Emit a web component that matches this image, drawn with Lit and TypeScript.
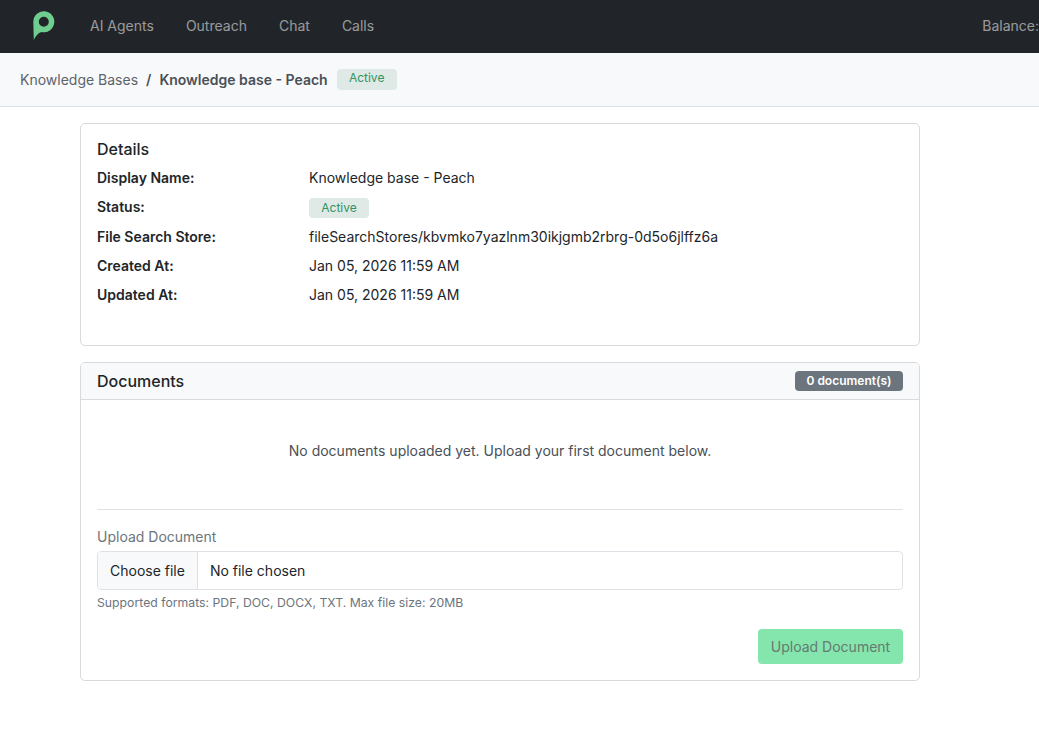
import { LitElement, html, css } from "lit";
import { customElement } from "lit/decorators.js";

@customElement("app-root")
export class AppRoot extends LitElement {
  static styles = css`
    :host { display: block; width: 1039px; height: 752px; overflow: hidden; background: #fff; font-family: Inter, "Liberation Sans", sans-serif; font-size: 14px; line-height: 21px; color: #212529; }
    * { box-sizing: border-box; }
    .nav { height: 53px; background: #212529; display: flex; align-items: center; padding: 0 0 2px 32px; white-space: nowrap; overflow: hidden; }
    .logo { width: 24px; height: 32px; display: block; margin-right: 34px; margin-top: -1px; flex: none; }
    .links { display: flex; gap: 32px; color: rgba(255,255,255,.55); }
    .balance { margin-left: auto; color: rgba(255,255,255,.55); }
    .crumbs { height: 54px; background: #f8f9fa; border-bottom: 1px solid #dee2e6; display: flex; align-items: center; padding: 0 20px; color: #6c757d; }
    .crumbs .root { color: #5c636a; }
    .crumbs .sep { margin: 0 8px; font-weight: 600; color: #495057; }
    .crumbs .cur { font-weight: 600; color: #495057; margin-right: 9px; }
    .active { display: block; width: 60px; height: 20px; line-height: 19px; border-radius: 4px; background: #dfe9e5; color: #2f9364; font-size: 12px; font-weight: 400; text-align: center; }
    .crumbs .active { height: 21px; line-height: 18px; margin-top: -1px; }
    .main { padding: 16px 119px 0 80px; display: flex; flex-direction: column; gap: 16px; }
    .card { border: 1px solid #d9dadb; border-radius: 5px; background: #fff; }
    .details { padding: 16px 16px 32px; height: 223px; }
    h5 { margin: 0 0 8px; font-size: 16px; font-weight: 500; line-height: 19px; }
    .row { display: grid; grid-template-columns: 212px 1fr; margin-bottom: 8px; height: 21px; align-items: start; }
    .row.status { height: 22px; }
    .row.status .active { margin-top: 2px; }
    .row b { font-weight: 600; }
    .head { height: 37px; background: #f8f9fa; border-bottom: 1px solid #d9dadb; border-radius: 4px 4px 0 0; display: flex; justify-content: space-between; align-items: center; padding: 0 16px; }
    .head .t { font-size: 16px; font-weight: 500; }
    .count { height: 20px; line-height: 19px; width: 108px; text-align: center; background: #6c757d; color: #fff; font-size: 12px; font-weight: 600; border-radius: 4px; }
    .body { padding: 16px; height: 280px; }
    .empty { color: #495057; text-align: center; padding-top: 24px; height: 93px; }
    hr { margin: 0 0 16px; border: 0; border-top: 1px solid #dfe1e3; }
    label { display: block; color: #6c757d; margin-bottom: 4px; height: 21px; }
    .file { display: flex; height: 39px; border: 1px solid #dee2e6; border-radius: 4px; align-items: center; overflow: hidden; }
    .file .btn { height: 100%; display: flex; align-items: center; padding: 0 12px; background: #f8f9fa; border-right: 1px solid #dee2e6; }
    .file .txt { padding-left: 12px; }
    .help { font-size: 12.25px; color: #6c757d; margin-top: 4px; height: 18px; line-height: 18px; }
    .foot { display: flex; justify-content: flex-end; margin-top: 17px; }
    .upload { height: 35px; width: 145px; border-radius: 4px; background: #84e6ac; color: #667a71; display: flex; align-items: center; justify-content: center; }
  `;

  render() {
    return html`
      <div class="nav">
        <svg class="logo" viewBox="0 0 24 32">
          <path fill="#6fce8f" fill-rule="evenodd" d="M1.300 12.700A10.500 10.500 0 1 1 9.500 23C6 24 3.500 27 1.800 31ZM6.800 12.700A5 5 0 1 0 16.800 12.700A5 5 0 1 0 6.800 12.700Z"/>
        </svg>
        <div class="links"><span>AI Agents</span><span>Outreach</span><span>Chat</span><span>Calls</span></div>
        <span class="balance">Balance:</span>
      </div>
      <div class="crumbs">
        <span class="root">Knowledge Bases</span><span class="sep">/</span><span class="cur">Knowledge base - Peach</span><span class="active">Active</span>
      </div>
      <div class="main">
        <div class="card details">
          <h5>Details</h5>
          <div class="row"><b>Display Name:</b><span>Knowledge base - Peach</span></div>
          <div class="row status"><b>Status:</b><span><span class="active">Active</span></span></div>
          <div class="row"><b>File Search Store:</b><span>fileSearchStores/kbvmko7yazlnm30ikjgmb2rbrg-0d5o6jlffz6a</span></div>
          <div class="row"><b>Created At:</b><span>Jan 05, 2026 11:59 AM</span></div>
          <div class="row"><b>Updated At:</b><span>Jan 05, 2026 11:59 AM</span></div>
        </div>
        <div class="card">
          <div class="head"><span class="t">Documents</span><span class="count">0 document(s)</span></div>
          <div class="body">
            <div class="empty">No documents uploaded yet. Upload your first document below.</div>
            <hr />
            <label>Upload Document</label>
            <div class="file"><span class="btn">Choose file</span><span class="txt">No file chosen</span></div>
            <div class="help">Supported formats: PDF, DOC, DOCX, TXT. Max file size: 20MB</div>
            <div class="foot"><div class="upload">Upload Document</div></div>
          </div>
        </div>
      </div>
    `;
  }
}
